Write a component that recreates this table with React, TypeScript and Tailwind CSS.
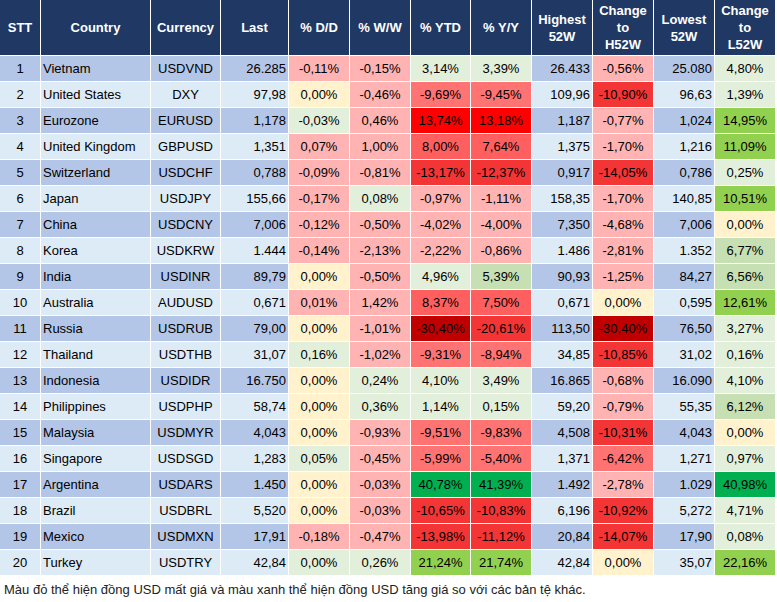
import React from "react";

// heatmap fills
const FILL: Record<string, string> = {
  lr: "bg-[#ffb3b3]",
  cr: "bg-[#fff2cc]",
  lg: "bg-[#e2efda]",
  mg: "bg-[#c6e0b4]",
  r1: "bg-[#ff7373]",
  r2: "bg-[#ff5f5f]",
  r3: "bg-[#f33535]",
  r4: "bg-[#ff0000]",
  r5: "bg-[#c00000]",
  g1: "bg-[#92d050]",
  g2: "bg-[#00b050]",
};

type Row = [string, string, string, [string, string][], string, [string, string], string, [string, string]];

// country, currency, last, [D/D, W/W, YTD, Y/Y], high, changeH, low, changeL
const ROWS: Row[] = [
  ["Vietnam", "USDVND", "26.285", [["-0,11%", "lr"], ["-0,15%", "lr"], ["3,14%", "lg"], ["3,39%", "lg"]], "26.433", ["-0,56%", "lr"], "25.080", ["4,80%", "lg"]],
  ["United States", "DXY", "97,98", [["0,00%", "cr"], ["-0,46%", "lr"], ["-9,69%", "r1"], ["-9,45%", "r1"]], "109,96", ["-10,90%", "r3"], "96,63", ["1,39%", "lg"]],
  ["Eurozone", "EURUSD", "1,178", [["-0,03%", "lg"], ["0,46%", "lr"], ["13,74%", "r4"], ["13,18%", "r4"]], "1,187", ["-0,77%", "lr"], "1,024", ["14,95%", "g1"]],
  ["United Kingdom", "GBPUSD", "1,351", [["0,07%", "lr"], ["1,00%", "lr"], ["8,00%", "r2"], ["7,64%", "r2"]], "1,375", ["-1,70%", "lr"], "1,216", ["11,09%", "g1"]],
  ["Switzerland", "USDCHF", "0,788", [["-0,09%", "lr"], ["-0,81%", "lr"], ["-13,17%", "r3"], ["-12,37%", "r3"]], "0,917", ["-14,05%", "r3"], "0,786", ["0,25%", "lg"]],
  ["Japan", "USDJPY", "155,66", [["-0,17%", "lr"], ["0,08%", "lg"], ["-0,97%", "lr"], ["-1,11%", "lr"]], "158,35", ["-1,70%", "lr"], "140,85", ["10,51%", "g1"]],
  ["China", "USDCNY", "7,006", [["-0,12%", "lr"], ["-0,50%", "lr"], ["-4,02%", "lr"], ["-4,00%", "lr"]], "7,350", ["-4,68%", "lr"], "7,006", ["0,00%", "cr"]],
  ["Korea", "USDKRW", "1.444", [["-0,14%", "lr"], ["-2,13%", "lr"], ["-2,22%", "lr"], ["-0,86%", "lr"]], "1.486", ["-2,81%", "lr"], "1.352", ["6,77%", "mg"]],
  ["India", "USDINR", "89,79", [["0,00%", "cr"], ["-0,50%", "lr"], ["4,96%", "lg"], ["5,39%", "mg"]], "90,93", ["-1,25%", "lr"], "84,27", ["6,56%", "mg"]],
  ["Australia", "AUDUSD", "0,671", [["0,01%", "lr"], ["1,42%", "lr"], ["8,37%", "r2"], ["7,50%", "r2"]], "0,671", ["0,00%", "cr"], "0,595", ["12,61%", "g1"]],
  ["Russia", "USDRUB", "79,00", [["0,00%", "cr"], ["-1,01%", "lr"], ["-30,40%", "r5"], ["-20,61%", "r3"]], "113,50", ["-30,40%", "r5"], "76,50", ["3,27%", "lg"]],
  ["Thailand", "USDTHB", "31,07", [["0,16%", "lg"], ["-1,02%", "lr"], ["-9,31%", "r1"], ["-8,94%", "r1"]], "34,85", ["-10,85%", "r3"], "31,02", ["0,16%", "lg"]],
  ["Indonesia", "USDIDR", "16.750", [["0,00%", "cr"], ["0,24%", "lg"], ["4,10%", "lg"], ["3,49%", "lg"]], "16.865", ["-0,68%", "lr"], "16.090", ["4,10%", "lg"]],
  ["Philippines", "USDPHP", "58,74", [["0,00%", "cr"], ["0,36%", "lg"], ["1,14%", "lg"], ["0,15%", "lg"]], "59,20", ["-0,79%", "lr"], "55,35", ["6,12%", "mg"]],
  ["Malaysia", "USDMYR", "4,043", [["0,00%", "cr"], ["-0,93%", "lr"], ["-9,51%", "r1"], ["-9,83%", "r1"]], "4,508", ["-10,31%", "r3"], "4,043", ["0,00%", "cr"]],
  ["Singapore", "USDSGD", "1,283", [["0,05%", "lg"], ["-0,45%", "lr"], ["-5,99%", "r1"], ["-5,40%", "r1"]], "1,371", ["-6,42%", "r1"], "1,271", ["0,97%", "lg"]],
  ["Argentina", "USDARS", "1.450", [["0,00%", "cr"], ["-0,03%", "lr"], ["40,78%", "g2"], ["41,39%", "g2"]], "1.492", ["-2,78%", "lr"], "1.029", ["40,98%", "g2"]],
  ["Brazil", "USDBRL", "5,520", [["0,00%", "cr"], ["-0,03%", "lr"], ["-10,65%", "r3"], ["-10,83%", "r3"]], "6,196", ["-10,92%", "r3"], "5,272", ["4,71%", "lg"]],
  ["Mexico", "USDMXN", "17,91", [["-0,18%", "lr"], ["-0,47%", "lr"], ["-13,98%", "r3"], ["-11,12%", "r3"]], "20,84", ["-14,07%", "r3"], "17,90", ["0,08%", "lg"]],
  ["Turkey", "USDTRY", "42,84", [["0,00%", "lg"], ["0,26%", "lg"], ["21,24%", "g1"], ["21,74%", "g1"]], "42,84", ["0,00%", "cr"], "35,07", ["22,16%", "g1"]],
];

// header labels, one entry per line
const HEADERS = [
  ["STT"], ["Country"], ["Currency"], ["Last"], ["% D/D"], ["% W/W"], ["% YTD"], ["% Y/Y"],
  ["Highest", "52W"], ["Change", "to", "H52W"], ["Lowest", "52W"], ["Change", "to", "L52W"],
];

function Cell({ bg, align = "center", children }: { bg: string; align?: "left" | "center" | "right"; children: React.ReactNode }) {
  const a = align === "left" ? "justify-start pl-[2px]" : align === "right" ? "justify-end pr-[2px]" : "justify-center";
  return <div className={`flex items-center whitespace-nowrap ${a} ${bg}`}>{children}</div>;
}

export default function App() {
  return (
    <div className="h-[602px] w-[777px] bg-white text-[13px] text-black" style={{ fontFamily: '"Liberation Sans", Arial, sans-serif' }}>
      <div className="grid w-[775px] grid-cols-[40px_109px_69px_67px_60px_60px_59px_60px_60px_60px_60px_60px] grid-rows-[55px_repeat(20,25px)] gap-px bg-white">
        {HEADERS.map((lines, k) => (
          <div key={k} className="flex flex-col items-center justify-center bg-[#1f3864] text-center font-bold leading-[17px] text-white">
            {lines.map((l) => (
              <span key={l}>{l}</span>
            ))}
          </div>
        ))}
        {ROWS.map((r, i) => {
          const base = i % 2 === 0 ? "bg-[#b4c6e7]" : "bg-[#ddebf7]";
          const [country, cur, last, pct, high, chH, low, chL] = r;
          return (
            <React.Fragment key={country}>
              <Cell bg={base}>{i + 1}</Cell>
              <Cell bg={base} align="left">{country}</Cell>
              <Cell bg={base}>{cur}</Cell>
              <Cell bg={base} align="right">{last}</Cell>
              {pct.map(([v, c], j) => (
                <Cell key={j} bg={FILL[c]}>{v}</Cell>
              ))}
              <Cell bg={base} align="right">{high}</Cell>
              <Cell bg={FILL[chH[1]]}>{chH[0]}</Cell>
              <Cell bg={base} align="right">{low}</Cell>
              <Cell bg={FILL[chL[1]]}>{chL[0]}</Cell>
            </React.Fragment>
          );
        })}
      </div>
      <p className="mt-[7px] pl-[4px] text-[13px] leading-[16px] text-[#222]">
        Màu đỏ thể hiện đồng USD mất giá và màu xanh thể hiện đồng USD tăng giá so với các bản tệ khác.
      </p>
    </div>
  );
}
